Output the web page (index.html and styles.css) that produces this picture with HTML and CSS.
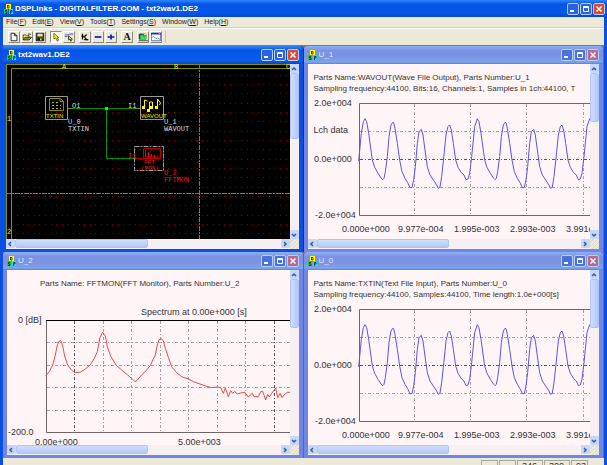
FILE: index.html
```
<!DOCTYPE html>
<html lang="en">
<head>
<meta charset="utf-8">
<title>DSPLinks - DIGITALFILTER.COM - txt2wav1.DE2</title>
<link rel="stylesheet" href="styles.css">
</head>
<body>
<svg class="defs" aria-hidden="true">
  <defs>
    <symbol id="logo" viewBox="0 0 9 10">
      <path fill="#ff0" d="M2 0h5v5H2z"/><path fill="#0d2" d="M0 5h4v5H0z"/><path fill="#0ef" d="M5 5h4v5H5z"/>
      <path fill="none" stroke="#222" stroke-width=".8" d="M3.500 1v3h1.500V1.500H3.500M3 6.500H1.500v1.500H3v1.500H1M6.500 10V6.500h1.500v1.500H6.500"/>
    </symbol>
    <symbol id="min" viewBox="0 0 10 10"><path fill="#fff" d="M2 6h4v2H2z"/></symbol>
    <symbol id="max" viewBox="0 0 10 10"><path fill="none" stroke="#fff" d="M2.500 2.500h5v5h-5zM2 3.500h6"/></symbol>
    <symbol id="close" viewBox="0 0 10 10"><path fill="none" stroke="#fff" stroke-width="1.500" d="M2.500 2.500l5 5M7.500 2.500l-5 5"/></symbol>
    <symbol id="left" viewBox="0 0 8 8"><path fill="none" stroke="#3a5a8a" stroke-width="1.500" d="M5 2L3 4l2 2"/></symbol>
    <symbol id="right" viewBox="0 0 8 8"><path fill="none" stroke="#3a5a8a" stroke-width="1.500" d="M3 2l2 2-2 2"/></symbol>
    <symbol id="up" viewBox="0 0 8 8"><path fill="none" stroke="#3a5a8a" stroke-width="1.500" d="M2 5l2-2 2 2"/></symbol>
    <symbol id="down" viewBox="0 0 8 8"><path fill="none" stroke="#3a5a8a" stroke-width="1.500" d="M2 3l2 2 2-2"/></symbol>
    <pattern id="dots" width="28" height="28" patternUnits="userSpaceOnUse" x="11" y="11">
      <path stroke="#900000" stroke-dasharray="1 5 1 4 1 5 1 4 1 5" d="M0 .500h28M0 9.500h28M0 18.500h28"/>
    </pattern>
    <path id="period" vector-effect="non-scaling-stroke" d="M183 176L188 185L194 220L205 300L212 322L222 340L232 355L236 359L240 355L244 335L250 290L255 230L261 195L266 187L269 188L273 205L280 250L287 300L294 335L303 355L311 368L318 383L324 383L329 360L334 320L340 250L345 215L352 208L357 225L363 270L370 320L378 345L388 360L398 375L403 385L408 381L413 350L420 285L426 225L432 200L437 195L442 210L448 250L455 300L462 322L472 338L480 345L486 359L492 357L497 340L503 290L512 200L520 176"/>
    <g id="wave">
      <g class="grid">
        <path d="M52 67.500h232M52 123.500h232M106.500 40v111M162.500 40v111M218.500 40v111M275.500 40v111"/>
        <path class="dark" d="M52 95.500h232"/>
      </g>
      <path class="box" d="M284 39.500H51.500v112H284"/>
      <g class="trace blue" transform="translate(-4 -4) scale(.33333)">
        <path vector-effect="non-scaling-stroke" d="M164 303L172 220L178 185L183 176"/>
        <use href="#period"/><use href="#period" x="337"/><use href="#period" x="674"/>
      </g>
      <text x="6" y="42">2.0e+004</text>
      <text x="6" y="98">0.0e+000</text>
      <text x="7" y="154">-2.0e+004</text>
      <text x="34" y="168">0.000e+000</text>
      <text x="90" y="168">9.977e-004</text>
      <text x="146" y="168">1.995e-003</text>
      <text x="202" y="168">2.993e-003</text>
      <text x="258" y="168">3.991e</text>
    </g>
  </defs>
</svg>

<div class="app">
  <header class="titlebar">
    <svg class="logo"><use href="#logo"/></svg>
    <h1>DSPLinks - DIGITALFILTER.COM - txt2wav1.DE2</h1>
    <div class="controls">
      <button aria-label="Minimize"><svg><use href="#min"/></svg></button>
      <button aria-label="Maximize"><svg><use href="#max"/></svg></button>
      <button class="x" aria-label="Close"><svg><use href="#close"/></svg></button>
    </div>
  </header>
  <div class="client">
    <nav class="menu">
      <button>File(<u>F</u>)</button><button>Edit(<u>E</u>)</button><button>View(<u>V</u>)</button><button>Tools(<u>T</u>)</button><button>Settings(<u>S</u>)</button><button>Window(<u>W</u>)</button><button>Help(<u>H</u>)</button>
    </nav>
    <div class="toolbar">
      <div class="tools">
        <button aria-label="New"><svg viewBox="0 0 12 12"><path fill="#fff" stroke="#111" d="M2.500 1.500h4l3 3v6h-7zM6.500 1.500v3h3"/></svg></button>
        <button aria-label="Open"><svg viewBox="0 0 12 12"><path fill="#fe6" stroke="#333" d="M1.500 9.500v-6h3l1 1h3v2"/><path fill="#990" stroke="#222" d="M1.500 9.500l2-3h8l-3 3z"/><path fill="none" stroke="#222" d="M7 2.500h3v1"/></svg></button>
        <button aria-label="Save"><svg viewBox="0 0 12 12"><path fill="#660" stroke="#111" d="M1.500 1.500h9v9h-9z"/><path fill="#ddd" d="M3 2h6v3H3zM6 8h2v2H6z"/><path fill="#111" d="M3 7h3v3H3zM8 7h1v3H8z"/></svg></button>
      </div>
      <div class="tools">
        <button class="pressed" aria-label="Select"><svg viewBox="0 0 12 12"><path fill="#ff0" stroke="#553" d="M3.500 1.500v7l2-1.500 2 4 1.500-1-1.500-3h2z"/></svg></button>
        <button aria-label="Wire"><svg viewBox="0 0 12 12"><path fill="none" stroke="#24c" d="M1 3.500h4l1-1h5M1 5.500h3"/><path fill="#ff0" stroke="#222" d="M5.500 4.500v5l1.500-1 1 2.500 1-.500-1-2h2z"/></svg></button>
      </div>
      <div class="tools">
        <button aria-label="Scale"><svg viewBox="0 0 12 12"><path fill="none" stroke="#111" stroke-width="1.500" d="M3 2v7M1.500 5h3M8 3L5 6l4 4M5 9h5"/></svg></button>
        <button aria-label="Zoom out"><svg viewBox="0 0 12 12"><path fill="#11c" d="M2 5h8v2H2z"/></svg></button>
        <button aria-label="Zoom in"><svg viewBox="0 0 12 12"><path fill="#11c" d="M2 5h8v2H2zM5 3h2v6H5z"/></svg></button>
      </div>
      <div class="tools">
        <button class="letter">A</button>
      </div>
      <div class="tools">
        <button aria-label="Monitor"><svg viewBox="0 0 12 12"><path fill="#088" stroke="#222" d="M1.500 2.500h8v6h-8z"/><path fill="#4d5" d="M3 5l2-2 2 3 3-2v5H3z"/><path fill="#fd4" d="M7 2h3v2H7z"/><path stroke="#333" d="M1 10.500h11"/></svg></button>
        <button aria-label="Graph"><svg viewBox="0 0 12 12"><path fill="#fff" stroke="#55c" d="M.500 1.500h11v9H.500z"/><path fill="#22d" d="M0 1h12v2H0z"/><path fill="#f66" d="M9 1h2v2H9z"/><path fill="none" stroke="#2a4" d="M1 7l2-2 3 3 2-1 3 2"/></svg></button>
      </div>
    </div>

    <main class="mdi">
      <section class="window active">
        <header class="wintitle">
          <svg class="logo"><use href="#logo"/></svg><h2>txt2wav1.DE2</h2>
          <div class="controls">
            <button aria-label="Minimize"><svg><use href="#min"/></svg></button>
            <button aria-label="Maximize"><svg><use href="#max"/></svg></button>
            <button class="x" aria-label="Close"><svg><use href="#close"/></svg></button>
          </div>
        </header>
        <div class="pane schematic">
          <svg class="drawing" width="600" height="400">
            <path fill="url(#dots)" d="M10 10h590v390H10z"/>
            <path class="olive" d="M0 .500h600M.500 0v400M5.500 400V4.500H600"/>
            <g class="mark"><text x="56" y="5">A</text><text x="168" y="5">B</text><text x="280" y="5">C</text><text x="1" y="57">1</text><text x="1" y="170">2</text></g>
            <path class="page" d="M0 129.500h600M193.500 0v400"/>
            <path class="wire" d="M66 44.500h63M100.500 44.500v50h28"/>
            <path class="olive" d="M62 44.500h5M129 44.500h5"/>
            <path fill="#0f0" d="M99 43h3v3h-3z"/>
            <path class="part" d="M39.500 32.500h22v23h-22zM134.500 32.500h23v23h-23z"/>
            <path class="part dashed" d="M128.500 82.500h29v24h-29z"/>
            <path class="olive" d="M43.500 34.500h11l3 3v9h-14zM54 34.500v3h3.500"/>
            <path stroke="#bb0" stroke-dasharray="2 2" d="M46 38.500h7M46 41.500h9M46 44.500h9"/>
            <path fill="#ff0" d="M136 42h3v3h-3zM141 45h3v3h-3zM144 42h3v3h-3zM149 42h3v3h-3z"/>
            <path fill="none" stroke="#ff0" d="M138.500 43v-7l3 1M143.500 46v-8h3v5M151.500 43v-8l3 4-1 2"/>
            <g class="caption"><text x="40" y="54">TXTIN</text><text x="135" y="54">WAVOUT</text></g>
            <g class="red">
              <path fill="none" stroke="#b00" d="M137.500 84.500h17v10h-17zM129 94.500h8"/>
              <path stroke="#f00" fill="none" d="M139.500 86v7h13M142.500 93v-5M145.500 93v-3M148.500 93v-2"/>
              <g class="small"><text x="138" y="100">FFT</text><text x="135" y="106">(MON)</text></g>
              <text x="122" y="94">I1</text>
              <text x="158" y="111">U_2</text><text x="158" y="118">FFTMON</text>
            </g>
            <g class="label">
              <text x="66" y="44">O1</text><text x="122" y="44">I1</text>
              <text x="62" y="60">U_0</text><text x="62" y="67">TXTIN</text>
              <text x="158" y="60">U_1</text><text x="158" y="67">WAVOUT</text>
            </g>
          </svg>
        </div>
        <div class="vbar"><button aria-label="Scroll up"><svg><use href="#up"/></svg></button><div class="track"><div class="thumb tall"></div></div><button aria-label="Scroll down"><svg><use href="#down"/></svg></button></div>
        <div class="hbar"><button aria-label="Scroll left"><svg><use href="#left"/></svg></button><div class="track"><div class="thumb"></div></div><button aria-label="Scroll right"><svg><use href="#right"/></svg></button></div>
        <div class="grip"></div>
      </section>

      <section class="window">
        <header class="wintitle">
          <svg class="logo"><use href="#logo"/></svg><h2>U_1</h2>
          <div class="controls">
            <button aria-label="Minimize"><svg><use href="#min"/></svg></button>
            <button aria-label="Maximize"><svg><use href="#max"/></svg></button>
            <button class="x" aria-label="Close"><svg><use href="#close"/></svg></button>
          </div>
        </header>
        <div class="pane">
          <svg class="drawing" width="284" height="400"><use href="#wave"/></svg>
          <div class="info"><p>Parts Name:WAVOUT(Wave File Output), Parts Number:U_1</p><p>Sampling frequency:44100, Bits:16, Channels:1, Samples in 1ch:44100, T</p></div>
          <p class="channel">Lch data</p>
        </div>
        <div class="vbar"><button aria-label="Scroll up"><svg><use href="#up"/></svg></button><div class="track"><div class="thumb"></div></div><button aria-label="Scroll down"><svg><use href="#down"/></svg></button></div>
        <div class="hbar"><button aria-label="Scroll left"><svg><use href="#left"/></svg></button><div class="track"><div class="thumb"></div></div><button aria-label="Scroll right"><svg><use href="#right"/></svg></button></div>
        <div class="grip"></div>
      </section>

      <section class="window">
        <header class="wintitle">
          <svg class="logo"><use href="#logo"/></svg><h2>U_2</h2>
          <div class="controls">
            <button aria-label="Minimize"><svg><use href="#min"/></svg></button>
            <button aria-label="Maximize"><svg><use href="#max"/></svg></button>
            <button class="x" aria-label="Close"><svg><use href="#close"/></svg></button>
          </div>
        </header>
        <div class="pane">
          <svg class="drawing" width="284" height="400">
            <g class="grid">
              <path d="M40 72.500h244M40 95.500h244M40 117.500h244M40 140.500h244M96.500 51v111M124.500 51v111M153.500 51v111M181.500 51v111M210.500 51v111M238.500 51v111"/>
              <path class="dark" d="M67.500 51v111M267.500 51v111"/>
            </g>
            <path class="box" d="M39.500 50v112.500H284"/>
            <path stroke="#000" d="M39 50.500h245"/>
            <g class="trace crimson" transform="translate(-7 -20) scale(.33333)">
              <path vector-effect="non-scaling-stroke" d="M137 378L148 365L158 345L165 320L172 285L178 273L182 271L188 288L194 318L203 345L213 358L222 367L240 367L255 358L270 345L283 325L292 305L300 262L308 247L316 258L322 290L332 318L348 345L365 360L383 375L398 388L405 395L412 390L425 375L440 360L452 345L458 330L465 318L472 285L477 269L484 267L490 272L496 295L505 322L515 350L530 368L545 380L565 387L580 395L600 402L620 409L635 413L653 411L662 413L670 430L676 414L685 440L692 422L698 430L704 424L712 432L722 429L735 427L745 441L757 430L762 440L775 440L782 425L788 424L797 450L803 433L808 441L815 430L827 414L833 443L840 430L846 443L855 432L862 427L872 427"/>
            </g>
            <text x="134" y="45">Spectrum at 0.00e+000 [s]</text>
            <text x="11" y="53">0 [dB]</text>
            <text x="1" y="165">-200.0</text>
            <text x="28" y="175">0.00e+000</text>
            <text x="171" y="175">5.00e+003</text>
          </svg>
          <div class="info indented"><p>Parts Name: FFTMON(FFT Monitor), Parts Number:U_2</p></div>
        </div>
        <div class="vbar"><button aria-label="Scroll up"><svg><use href="#up"/></svg></button><div class="track"><div class="thumb"></div></div><button aria-label="Scroll down"><svg><use href="#down"/></svg></button></div>
        <div class="hbar"><button aria-label="Scroll left"><svg><use href="#left"/></svg></button><div class="track"><div class="thumb"></div></div><button aria-label="Scroll right"><svg><use href="#right"/></svg></button></div>
        <div class="grip"></div>
      </section>

      <section class="window">
        <header class="wintitle">
          <svg class="logo"><use href="#logo"/></svg><h2>U_0</h2>
          <div class="controls">
            <button aria-label="Minimize"><svg><use href="#min"/></svg></button>
            <button aria-label="Maximize"><svg><use href="#max"/></svg></button>
            <button class="x" aria-label="Close"><svg><use href="#close"/></svg></button>
          </div>
        </header>
        <div class="pane">
          <svg class="drawing" width="284" height="400"><use href="#wave"/></svg>
          <div class="info"><p>Parts Name:TXTIN(Text File Input), Parts Number:U_0</p><p>Sampling frequency:44100, Samples:44100, Time length:1.0e+000[s]</p></div>
        </div>
        <div class="vbar"><button aria-label="Scroll up"><svg><use href="#up"/></svg></button><div class="track"><div class="thumb"></div></div><button aria-label="Scroll down"><svg><use href="#down"/></svg></button></div>
        <div class="hbar"><button aria-label="Scroll left"><svg><use href="#left"/></svg></button><div class="track"><div class="thumb"></div></div><button aria-label="Scroll right"><svg><use href="#right"/></svg></button></div>
        <div class="grip"></div>
      </section>
    </main>
    <footer class="status"><span></span><span></span><span class="wide">346</span><span class="wide">300</span><span>93</span></footer>
  </div>
</div>
</body>
</html>
```
FILE: styles.css
```
* { box-sizing: border-box; }
body {
  margin: 0;
  font-family: "Liberation Sans", sans-serif;
  font-size: 9px;
  color: #333;
}
h1, h2, p { margin: 0; }
button { font: inherit; color: inherit; padding: 0; border: 0; background: none; }
svg { display: block; }
.defs { position: absolute; width: 0; height: 0; }

.app { height: 100vh; display: flex; flex-direction: column; overflow: hidden; background: #0a4fe0; }
.titlebar {
  flex: none; height: 17px; display: flex; align-items: center; gap: 2px; padding: 0 2px 0 4px;
  background: linear-gradient(#2f86ff, #0553e4 25%, #0558ec 75%, #0348c8);
}
.logo { width: 9px; height: 10px; flex: none; }
h1, h2 { flex: 1; color: #fff; font-size: 8px; line-height: 12px; font-weight: bold; white-space: nowrap; overflow: hidden; }
.controls { display: flex; gap: 1px; }
.controls button { width: 12px; height: 12px; border: 1px solid #b8cdf8; border-radius: 2px; background: #2a62e4; }
.controls .x { background: #e0492a; }
.controls svg { width: 10px; height: 10px; }

.client { flex: 1; min-height: 0; display: flex; flex-direction: column; margin: 0 3px; background: #ece9d8; }
.menu { flex: none; height: 11px; display: flex; gap: 6px; padding-left: 3px; border-bottom: 1px solid #d0cec0; font-size: 7px; line-height: 10px; color: #222; }
.toolbar { flex: none; height: 17px; display: flex; gap: 4px; padding: 2px 0 2px 5px; border-top: 1px solid #fff; }
.tools { display: flex; gap: 1px; }
.tools button { width: 12px; height: 12px; border: 1px solid; border-color: #fff #8c8a7c #8c8a7c #fff; }
.tools svg { width: 10px; height: 10px; }
.tools .pressed { background: #f8f7f0; border-color: #8c8a7c #fff #fff #8c8a7c; }
.tools .letter { font: bold 10px/10px "Liberation Serif", serif; color: #111; }
.tools:last-child { padding-right: 3px; border-right: 1px solid #c4c2b4; }

.mdi { flex: 1; min-height: 0; display: grid; grid-template: 1fr 1fr / 1fr 1fr; padding-top: 1px; background: #7d7a6e; }
.window {
  min-width: 0; min-height: 0; display: grid;
  grid-template: 18px 1fr 10px / 1fr 9px;
  padding: 0 4px 3px; background: #7186e4; border-right: 1px solid #5563b8; border-radius: 4px 4px 0 0;
}
.window.active { background: #0b4fe2; border-right-color: #0430a8; padding-left: 3px; }
.wintitle {
  grid-column: 1 / 3; display: flex; align-items: center; gap: 2px; margin: 0 -4px; padding: 0 4px;
  background: linear-gradient(#8fb1f5, #7b93e4 25%, #7b93e0 60%, #7ba5ee 90%, #6478d8); border-radius: 4px 4px 0 0;
}
.active .wintitle { background: linear-gradient(#2f86ff, #0553e4 25%, #0a5cf0 80%, #0348c8); margin-left: -3px; }
.window:not(.active) h2 { color: #dfe6fb; font-weight: normal; }
.window:not(.active) .controls button { background: #4a72dc; }
.window:not(.active) .controls .x { background: #b8688c; }

.pane { position: relative; min-width: 0; min-height: 0; overflow: hidden; background: #fff5f7; }
.schematic { background: #000; }
.drawing { position: absolute; top: 0; left: 0; }
.info { position: relative; padding: 8px 0 0 6px; font-size: 8px; line-height: 11px; white-space: nowrap; }
.info.indented { padding-left: 33px; }
.channel { position: relative; margin: 31px 0 0 6px; line-height: 11px; }

.vbar, .hbar { display: flex; background: #f6f0f2; min-width: 0; min-height: 0; }
.vbar { flex-direction: column; }
.track { flex: 1; min-width: 0; min-height: 0; }
.vbar button, .hbar button { flex: none; width: 9px; height: 9px; background: #c6d7fb; border-radius: 1px; }
.vbar svg, .hbar svg { width: 8px; height: 8px; }
.thumb { background: linear-gradient(90deg, #d0defc, #b4c8f6); border: 1px solid #b0c4f4; border-radius: 2px; }
.vbar .thumb { height: 31%; }
.vbar .thumb.tall { height: 42%; }
.hbar .thumb { width: 50%; height: 9px; background: linear-gradient(#d0defc, #b4c8f6); }
.grip { background: repeating-linear-gradient(135deg, #ece9d8 0 2px, #dedbcc 2px 3px); }

text { font-size: 9px; fill: #333; }
.grid path { fill: none; stroke: #a2a0a6; stroke-dasharray: 3 2 1 2; }
.grid .dark { stroke: #555; }
.box { fill: none; stroke: #6c6668; }
.trace { fill: none; stroke-width: 1; }
.blue { stroke: #5555f5; }
.crimson { stroke: #f04848; }

.schematic text { font-family: "Liberation Mono", monospace; font-size: 7px; }
.olive { fill: none; stroke: #8c8a00; }
.wire { fill: none; stroke: #009000; }
.part { fill: none; stroke: #999; }
.dashed, .page { stroke-dasharray: 5 1 2 1; }
.page { fill: none; stroke: #777; }
.schematic .mark text { fill: #ee0; }
.schematic .caption text { fill: #ee0; font-family: "Liberation Sans", sans-serif; font-size: 6px; }
.schematic .red text { fill: #ff1010; }
.schematic .red .small text { font-size: 6px; }
.schematic .label text { fill: #ddd; }

.status { flex: none; height: 7px; display: flex; justify-content: flex-end; gap: 1px; padding: 2px 16px 0 0; overflow: hidden; font-size: 9px; line-height: 10px; }
.status span { width: 17px; height: 12px; border: 1px solid #aaa89a; padding-left: 4px; }
.status .wide { width: 26px; }
```
